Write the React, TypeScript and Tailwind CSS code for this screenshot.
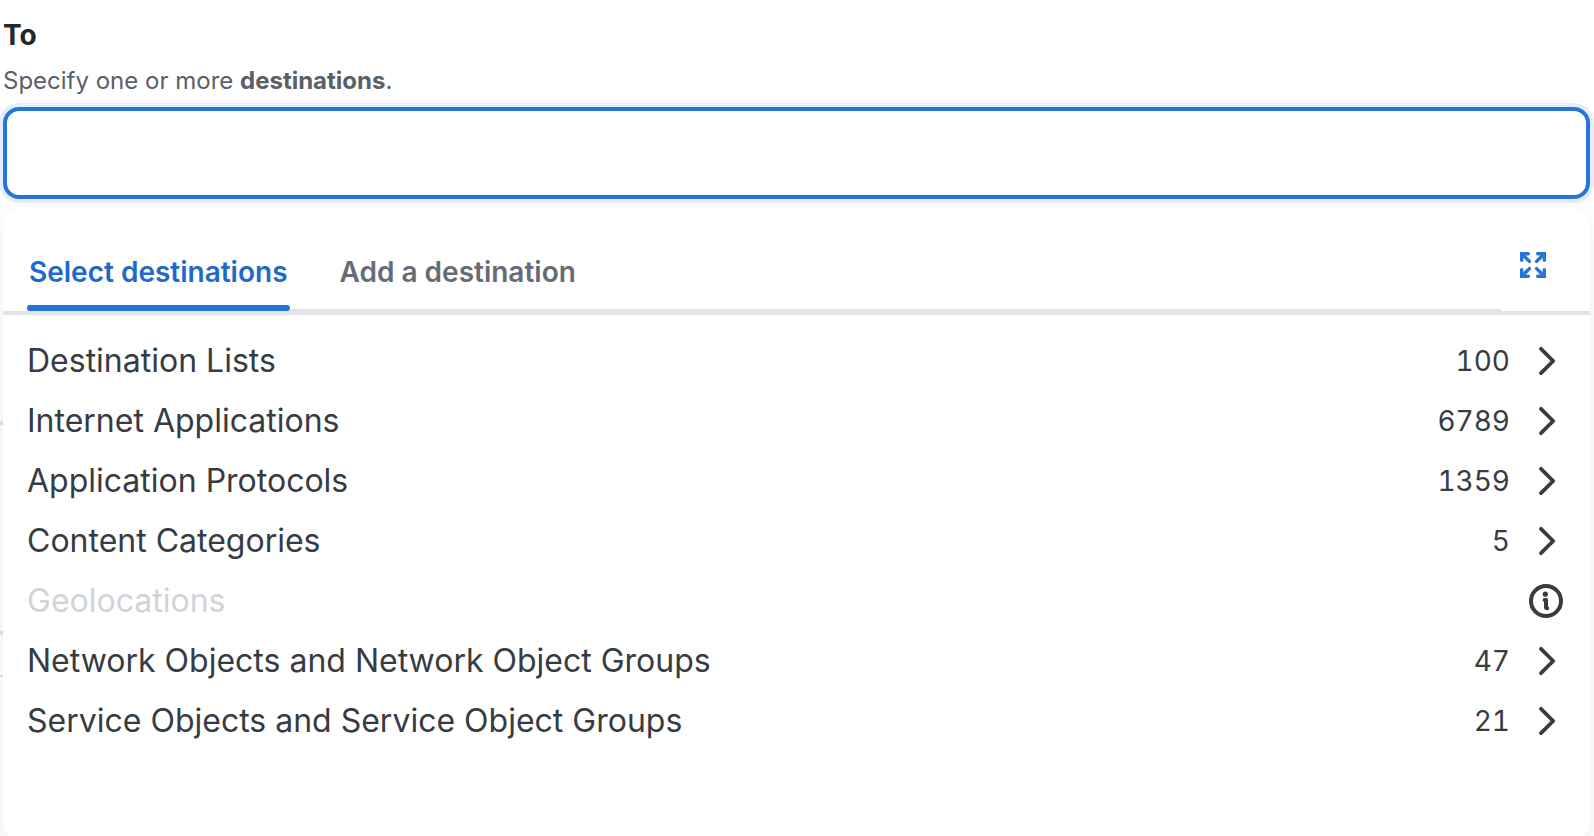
import { useState } from "react";

type Category = { name: string; count?: number };

const categories: Category[] = [
  { name: "Destination Lists", count: 100 },
  { name: "Internet Applications", count: 6789 },
  { name: "Application Protocols", count: 1359 },
  { name: "Content Categories", count: 5 },
  { name: "Geolocations" },
  { name: "Network Objects and Network Object Groups", count: 47 },
  { name: "Service Objects and Service Object Groups", count: 21 },
];

function ExpandIcon() {
  return (
    <svg viewBox="0 0 26 26" className="size-[26px]" fill="none" stroke="currentColor" strokeWidth="3.4" strokeLinecap="round" aria-hidden="true">
      <path d="M2 2 9.4 9.4M24 2 16.6 9.4M2 24 9.4 16.6M24 24 16.6 16.6" />
      <path d="M1.7 8.3V1.7H8.3M17.7 1.7H24.3V8.3M24.3 17.7V24.3H17.7M8.3 24.3H1.7V17.7" />
      <path d="M0 1Q0 0 1 0H8L0 8ZM25 0Q26 0 26 1V8L18 0ZM26 25Q26 26 25 26H18L26 18ZM1 26Q0 26 0 25V18L8 26Z" fill="currentColor" stroke="none" />
    </svg>
  );
}

function ChevronIcon() {
  return (
    <svg viewBox="0 0 18 30" className="h-[30px] w-[18px]" fill="none" stroke="currentColor" strokeWidth="3.8" strokeLinecap="round" strokeLinejoin="round" aria-hidden="true">
      <path d="M3 2.8 15.2 15 3 27.2" />
    </svg>
  );
}

function InfoIcon() {
  return (
    <svg viewBox="0 0 34 34" className="size-[34px]" fill="none" stroke="currentColor" aria-hidden="true">
      <circle cx="17" cy="17" r="15" strokeWidth="4" />
      <circle cx="16.3" cy="10.2" r="2.6" fill="currentColor" stroke="none" />
      <path d="M15.6 16H17V23.2Q17 24.2 18.2 24.2" strokeWidth="4" strokeLinecap="round" strokeLinejoin="round" />
    </svg>
  );
}

function CategoryRow({ name, count }: Category) {
  const disabled = count === undefined;
  return (
    <li className="flex h-[60px] items-center justify-between pr-[27px] pl-6 text-[#373c42]">
      <button type="button" disabled={disabled} className="flex grow items-center justify-between text-left disabled:text-[#d0d4d9]">
        <span className="text-[32px] leading-10">{name}</span>
        {!disabled && (
          <span className="flex items-center gap-7 pr-[7px]">
            <span className="text-[28px] leading-10 tabular-nums">{count}</span>
            <ChevronIcon />
          </span>
        )}
      </button>
      {disabled && (
        <button type="button" aria-label={`About ${name}`}>
          <InfoIcon />
        </button>
      )}
    </li>
  );
}

const tabs = ["Select destinations", "Add a destination"];

export default function App() {
  const [active, setActive] = useState(0);
  const [value, setValue] = useState("");

  return (
    <main className="relative h-screen overflow-hidden bg-white pt-[15px] pr-1 pl-[3px] font-['Inter','Liberation_Sans',sans-serif]">
      <div aria-hidden="true" className="absolute top-[421px] left-0 h-1 w-1/2 bg-[#e1e3e8]" />
      <div aria-hidden="true" className="absolute top-[631px] left-0 h-1 w-1/2 bg-[#e1e3e8]" />
      <div aria-hidden="true" className="absolute top-[675px] left-0 h-0.5 w-1/2 bg-[#e1e3e8]" />

      <label htmlFor="destinations" className="block text-[28px] leading-10 font-bold text-[#23282e]">
        To
      </label>
      <p className="mt-[10px] text-[24px] leading-8 text-[#596069]">
        Specify one or more <strong className="font-bold">destinations</strong>.
      </p>
      <input
        id="destinations"
        type="text"
        value={value}
        onChange={(event) => setValue(event.target.value)}
        className="relative z-10 mt-[10px] block h-[92px] w-full rounded-2xl border-4 border-[#2774d9] bg-white px-5 text-[28px] text-[#373c42] ring-4 ring-[#e3edfd] outline-none"
      />

      <section className="relative mt-2 min-h-[637px] rounded-3xl bg-white shadow-[0_8px_32px_rgba(0,0,0,0.07)]">
        <header className="flex h-[108px] items-end border-b-4 border-[#e1e3e8] pl-6">
          <div role="tablist" className="-mb-0.5 flex h-[88px] grow gap-12 border-b-4 border-[#e1e3e8]">
            {tabs.map((tab, index) => (
              <button
                key={tab}
                type="button"
                role="tab"
                aria-selected={active === index}
                onClick={() => setActive(index)}
                className="relative -mb-0.5 h-[86px] border-b-6 border-transparent px-0.5 pt-[14px] text-[28px] leading-10 font-semibold text-[#656c76] after:absolute after:inset-x-0 after:-bottom-1.5 after:h-1.5 after:rounded-full aria-selected:text-[#1d69cc] aria-selected:after:bg-[#2774d9]"
              >
                {tab}
              </button>
            ))}
          </div>
          <div className="flex w-[89px] justify-start self-stretch pt-[45px] pl-[19px]">
            <button type="button" aria-label="Expand" className="size-[26px] text-[#2774d9]">
              <ExpandIcon />
            </button>
          </div>
        </header>
        <ul className="pt-4">
          {categories.map((category) => (
            <CategoryRow key={category.name} {...category} />
          ))}
        </ul>
      </section>
    </main>
  );
}
